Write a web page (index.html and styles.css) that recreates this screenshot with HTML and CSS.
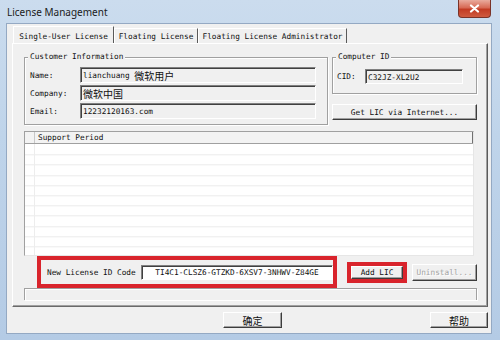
FILE: index.html
```html
<!DOCTYPE html>
<html lang="zh-CN">
<head>
    <meta charset="UTF-8">
    <title>License Management</title>
    <link rel="stylesheet" href="styles.css">
</head>
<body>
    <div class="window">
        <div class="titlebar">
            <span class="title">License Management</span>
            <div class="close">
                <svg width="11" height="9" viewBox="0 0 11 9">
                    <path d="M2 1.5 L9 7.5 M9 1.5 L2 7.5" stroke="#fff" stroke-width="2.2" stroke-linecap="round"/>
                </svg>
            </div>
        </div>

        <div class="client">
            <div class="tabs">
                <div class="tab active">Single-User License</div>
                <div class="tab t2">Floating License</div>
                <div class="tab t3">Floating License Administrator</div>
            </div>

            <div class="pane">
                <div class="top-row">
                    <div class="group customer">
                        <div class="group-title">Customer Information</div>
                        <div class="rows">
                            <div class="field-row">
                                <span class="label">Name:</span>
                                <div class="field">lianchuang&nbsp;<span class="cjk">微软用户</span></div>
                            </div>
                            <div class="field-row">
                                <span class="label">Company:</span>
                                <div class="field"><span class="cjk">微软中国</span></div>
                            </div>
                            <div class="field-row">
                                <span class="label">Email:</span>
                                <div class="field">12232120163.com</div>
                            </div>
                        </div>
                    </div>

                    <div class="side">
                        <div class="group computer">
                            <div class="group-title">Computer ID</div>
                            <div class="field-row cid-row">
                                <span class="label cid-label">CID:</span>
                                <div class="field cid-field">C32JZ-XL2U2</div>
                            </div>
                        </div>
                        <button class="btn get-lic">Get LIC via Internet...</button>
                    </div>
                </div>

                <div class="listview">
                    <div class="lv-header">
                        <div class="lv-stub"></div>
                        <div class="lv-col">Support Period</div>
                    </div>
                    <div class="lv-body"></div>
                </div>

                <div class="code-row">
                    <div class="mark code-box">
                        <span class="label code-label">New License ID Code</span>
                        <div class="field code-field">TI4C1-CLSZ6-GTZKD-6XSV7-3NHWV-Z84GE</div>
                    </div>
                    <div class="mark add-box">
                        <button class="btn add">Add LIC</button>
                    </div>
                    <button class="btn uninstall" disabled>Uninstall...</button>
                </div>

                <div class="group bottom-group"></div>
            </div>

            <div class="footer">
                <button class="btn ok"><span class="cjk">确定</span></button>
                <button class="btn help"><span class="cjk">帮助</span></button>
            </div>
        </div>
    </div>
</body>
</html>
```

FILE: styles.css
```css
body {
    margin: 0;
    font-family: "DejaVu Sans Mono", monospace;
    font-size: 7.75px;
    color: #111;
}
.window {
    width: 500px;
    height: 340px;
    box-sizing: border-box;
    padding: 0 8px 6px 6px;
    background: linear-gradient(180deg, #cbdcee 0%, #bfd4ea 40%, #b4cbe5 100%);
    display: flex;
    flex-direction: column;
}
.titlebar {
    height: 23px;
    display: flex;
    justify-content: space-between;
    align-items: flex-start;
}
.title {
    font-family: "Noto Sans", sans-serif;
    font-size: 10px;
    line-height: 14px;
    margin: 5px 0 0 1px;
    color: #1a1a1a;
}
.close {
    width: 33px;
    height: 18px;
    margin-right: 1px;
    box-sizing: border-box;
    border: 1px solid #7a3328;
    border-top: none;
    border-radius: 0 0 4px 4px;
    background: linear-gradient(180deg, #e9ab9d 0%, #d76a55 45%, #c23b23 55%, #cf5a3f 100%);
    display: flex;
    align-items: center;
    justify-content: center;
}
.client {
    flex: 1;
    background: #f0f0f0;
    border: 1px solid #94a9c3;
    padding: 2px 3px 0 5px;
    display: flex;
    flex-direction: column;
}
.cjk {
    font-family: "Noto Sans CJK SC", sans-serif;
    font-size: 10px;
}

/* tabs */
.tabs {
    height: 17px;
    display: flex;
    align-items: flex-end;
    margin-left: 1px;
}
.tab {
    height: 15px;
    box-sizing: border-box;
    border-top: 1px solid #fff;
    border-left: 1px solid #fff;
    border-right: 1px solid #5a5a5a;
    display: flex;
    align-items: center;
    justify-content: center;
}
.tab.active {
    width: 101px;
    height: 17px;
    padding-top: 2px;
}
.tab.t2 {
    width: 84px;
}
.tab.t3 {
    width: 149px;
}

/* tab page */
.pane {
    height: 264px;
    box-sizing: border-box;
    border: 1px solid;
    border-color: #fff #5a5a5a #6a6a6a #fff;
    box-shadow: inset -1px -1px 0 #a0a0a0;
    padding: 13px 0 0 11px;
    display: flex;
    flex-direction: column;
}
.top-row {
    display: flex;
    align-items: flex-start;
    gap: 4px;
}
.group {
    box-sizing: border-box;
    border: 1px solid #a0a0a0;
    box-shadow: 1px 1px 0 #fff, inset 1px 1px 0 #fff;
}
.group-title {
    width: fit-content;
    height: 10px;
    line-height: 10px;
    margin: -6px 0 0 -2px;
    padding: 0 2px;
    background: #f0f0f0;
}
.customer {
    width: 304px;
    height: 68px;
    padding: 0 11px 0 5px;
}
.rows {
    margin-top: 5px;
    display: flex;
    flex-direction: column;
    gap: 2px;
}
.field-row {
    display: flex;
    align-items: center;
}
.label {
    width: 50px;
    flex-shrink: 0;
}
.field {
    width: 236px;
    height: 16px;
    box-sizing: border-box;
    border: 1px solid;
    border-color: #808080 #fff #fff #808080;
    box-shadow: inset 1px 1px 0 #404040;
    background: #f0f0f0;
    padding: 1px 0 0 2px;
    display: flex;
    align-items: center;
    white-space: nowrap;
}

.side {
    display: flex;
    flex-direction: column;
}
.computer {
    width: 145px;
    height: 37px;
    padding: 0 13px 0 4px;
}
.computer .group-title {
    margin-left: -1px;
}
.cid-row {
    margin-top: 7px;
}
.cid-label {
    width: 28px;
}
.cid-field {
    width: 98px;
    height: 15px;
}

/* buttons */
.btn {
    font-family: "DejaVu Sans Mono", monospace;
    font-size: 7.75px;
    color: #111;
    margin: 0;
    padding: 0;
    box-sizing: border-box;
    background: #f0f0f0;
    border: 1px solid;
    border-color: #fff #3c3c3c #3c3c3c #fff;
    box-shadow: inset -1px -1px 0 #a0a0a0;
    display: flex;
    align-items: center;
    justify-content: center;
}
.get-lic {
    width: 145px;
    height: 16px;
    margin-top: 10px;
}

/* list */
.listview {
    width: 450px;
    height: 125px;
    margin-top: 6px;
    box-sizing: border-box;
    border: 1px solid;
    border-color: #a0a0a0 #e6e6e6 #e6e6e6 #a0a0a0;
    display: flex;
    flex-direction: column;
}
.lv-header {
    height: 11px;
    display: flex;
    background: #f3f3f3;
    border-bottom: 1px solid #a0a0a0;
}
.lv-stub {
    width: 9px;
    border-right: 1px solid #c8c8c8;
}
.lv-col {
    flex: 1;
    padding-left: 3px;
    line-height: 11px;
    border-right: 1px solid #707070;
}
.lv-body {
    flex: 1;
    background:
        linear-gradient(to right, transparent 9px, #ededed 9px, #ededed 10px, transparent 10px),
        repeating-linear-gradient(to bottom, transparent 0, transparent 9.2px, #ebebeb 9.2px, #ebebeb 10.2px);
    background-color: #fff;
    background-position: 0 0, 0 1.3px;
}

/* code entry */
.code-row {
    height: 32px;
    padding-left: 13px;
    display: flex;
    align-items: center;
}
.mark {
    box-sizing: border-box;
    border: 4px solid #d9242c;
}
.code-box {
    width: 300px;
    height: 32px;
    padding-left: 6px;
    display: flex;
    align-items: center;
}
.code-label {
    width: 94px;
}
.code-field {
    flex: 1;
    width: auto;
    height: 15px;
    background: #fff;
    justify-content: center;
    padding: 1px 0 0;
}
.add-box {
    width: 60px;
    height: 21px;
    margin-left: 10px;
}
.add {
    width: 100%;
    height: 100%;
}
.uninstall {
    width: 65px;
    height: 17px;
    margin-left: 5px;
    color: #a3a3a3;
    text-shadow: 1px 1px 0 #fff;
}
.bottom-group {
    width: 453px;
    height: 12px;
    border-bottom: none;
}

/* dialog buttons */
.footer {
    flex: 1;
    display: flex;
    align-items: flex-start;
    padding-top: 5px;
}
.ok {
    width: 59px;
    height: 16px;
    margin-left: 211px;
}
.help {
    width: 58px;
    height: 16px;
    margin-left: 148px;
}
```
